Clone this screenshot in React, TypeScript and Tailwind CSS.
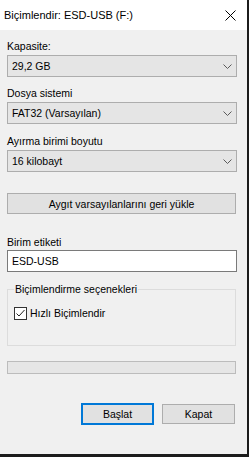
import React from 'react';

const Chevron: React.FC = () => (
    <svg width="9" height="5" viewBox="0 0 9 5" className="shrink-0">
        <path d="M0.5 0.5 L4.5 4.5 L8.5 0.5" fill="none" stroke="#5a5a5a" strokeWidth="1" />
    </svg>
);

const Select: React.FC<{ value: string; className?: string }> = ({ value, className = '' }) => (
    <div className={`flex items-center justify-between h-[22px] w-[230px] bg-[#e5e5e5] border border-[#adadad] pl-[4px] pr-[4px] ${className}`}>
        <span>{value}</span>
        <Chevron />
    </div>
);

const App: React.FC = () => {
    return (
        <div className="w-[249px] h-[457px] bg-[#1c1c1c] overflow-hidden" style={{ fontFamily: '"Liberation Sans", Arial, sans-serif' }}>
            <div className="w-[247px] h-[454px] bg-[#f0f0f0] text-[10.5px] leading-[16px] text-black flex flex-col">
                {/* Title bar */}
                <div className="h-[30px] bg-white flex items-center justify-between pl-[4px] pr-[11px]">
                    <span className="text-[11px]">Biçimlendir: ESD-USB (F:)</span>
                    <svg width="11" height="11" viewBox="0 0 11 11">
                        <path d="M0.5 0.5 L10.5 10.5 M10.5 0.5 L0.5 10.5" stroke="#000" strokeWidth="1" />
                    </svg>
                </div>

                <div className="flex flex-col pl-[7px] pt-[8px]">
                    <label className="block">Kapasite:</label>
                    <Select value="29,2 GB" className="mt-[1px]" />

                    <label className="block mt-[8px]">Dosya sistemi</label>
                    <Select value="FAT32 (Varsayılan)" className="mt-[1px]" />

                    <label className="block mt-[9px]">Ayırma birimi boyutu</label>
                    <Select value="16 kilobayt" className="mt-[1px]" />

                    <button className="mt-[21px] h-[21px] w-[229px] bg-[#e1e1e1] border border-[#adadad] text-center">
                        Aygıt varsayılanlarını geri yükle
                    </button>

                    <label className="block mt-[20px]">Birim etiketi</label>
                    <div className="h-[22px] w-[230px] bg-white border border-[#7a7a7a] flex items-center pl-[4px]">
                        ESD-USB
                    </div>

                    {/* Options group */}
                    <div className="relative mt-[17px] h-[57px] w-[229px] border border-[#dcdcdc]">
                        <span className="absolute -top-[9px] left-[6px] bg-[#f0f0f0] px-[1px]">Biçimlendirme seçenekleri</span>
                        <div className="flex items-center mt-[15px] ml-[6px]">
                            <div className="w-[13px] h-[13px] bg-white border border-[#333] flex items-center justify-center">
                                <svg width="11" height="11" viewBox="0 0 11 11">
                                    <path d="M1.5 5.5 L4 8 L9.5 2" fill="none" stroke="#222" strokeWidth="1" />
                                </svg>
                            </div>
                            <span className="ml-[3px]">Hızlı Biçimlendir</span>
                        </div>
                    </div>

                    {/* Progress */}
                    <div className="mt-[15px] h-[13px] w-[229px] bg-[#e6e6e6] border border-[#bcbcbc]" />

                    {/* Buttons */}
                    <div className="flex items-start gap-[8px] mt-[29px] ml-[74px]">
                        <button className="h-[22px] w-[73px] bg-[#e1e1e1] border-2 border-[#0078d7]">Başlat</button>
                        <button className="mt-[1px] h-[20px] w-[73px] bg-[#e1e1e1] border border-[#adadad]">Kapat</button>
                    </div>
                </div>
            </div>
        </div>
    );
};

export default App;
